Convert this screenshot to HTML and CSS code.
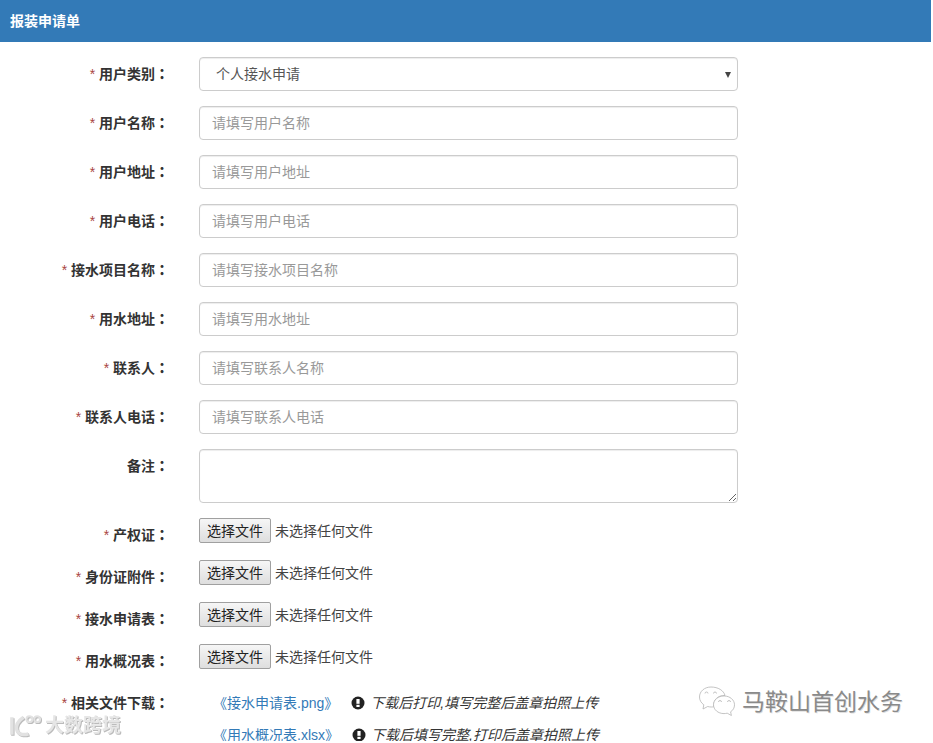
FILE: index.html
```html
<!DOCTYPE html>
<html lang="zh-CN">
<head>
<meta charset="utf-8">
<title>报装申请单</title>
<link rel="stylesheet" href="styles.css">
</head>
<body>
<div class="page">
<header class="panel-head">报装申请单</header>
<form class="form">
  <div class="row"><label class="label"><i>*</i> 用户类别<b lang="zh-TW">：</b></label>
    <div class="select-wrap"><select class="control select"><option>个人接水申请</option></select></div></div>
  <div class="row"><label class="label"><i>*</i> 用户名称<b lang="zh-TW">：</b></label><input class="control" placeholder="请填写用户名称"></div>
  <div class="row"><label class="label"><i>*</i> 用户地址<b lang="zh-TW">：</b></label><input class="control" placeholder="请填写用户地址"></div>
  <div class="row"><label class="label"><i>*</i> 用户电话<b lang="zh-TW">：</b></label><input class="control" placeholder="请填写用户电话"></div>
  <div class="row"><label class="label"><i>*</i> 接水项目名称<b lang="zh-TW">：</b></label><input class="control" placeholder="请填写接水项目名称"></div>
  <div class="row"><label class="label"><i>*</i> 用水地址<b lang="zh-TW">：</b></label><input class="control" placeholder="请填写用水地址"></div>
  <div class="row"><label class="label"><i>*</i> 联系人<b lang="zh-TW">：</b></label><input class="control" placeholder="请填写联系人名称"></div>
  <div class="row"><label class="label"><i>*</i> 联系人电话<b lang="zh-TW">：</b></label><input class="control" placeholder="请填写联系人电话"></div>
  <div class="row"><label class="label">备注<b lang="zh-TW">：</b></label><textarea class="control area"></textarea></div>
  <div class="row file-row"><label class="label"><i>*</i> 产权证<b lang="zh-TW">：</b></label><div class="file"><button type="button" class="file-btn">选择文件</button><span>未选择任何文件</span></div></div>
  <div class="row file-row"><label class="label"><i>*</i> 身份证附件<b lang="zh-TW">：</b></label><div class="file"><button type="button" class="file-btn">选择文件</button><span>未选择任何文件</span></div></div>
  <div class="row file-row"><label class="label"><i>*</i> 接水申请表<b lang="zh-TW">：</b></label><div class="file"><button type="button" class="file-btn">选择文件</button><span>未选择任何文件</span></div></div>
  <div class="row file-row"><label class="label"><i>*</i> 用水概况表<b lang="zh-TW">：</b></label><div class="file"><button type="button" class="file-btn">选择文件</button><span>未选择任何文件</span></div></div>
  <div class="row dl-row"><label class="label"><i>*</i> 相关文件下载<b lang="zh-TW">：</b></label>
    <div class="downloads">
      <div class="dl"><a class="dl-link" href="#">《接水申请表.png》</a>
        <svg class="sign" viewBox="0 0 14 14"><circle cx="7" cy="7" r="6.500"/><rect x="5.400" y="3" width="3.200" height="4.800" fill="#fff"/><rect x="5.400" y="8.800" width="3.200" height="2.200" fill="#fff"/></svg>
        <em>下载后打印,填写完整后盖章拍照上传</em></div>
      <div class="dl"><a class="dl-link" href="#">《用水概况表.xlsx》</a>
        <svg class="sign" viewBox="0 0 14 14"><circle cx="7" cy="7" r="6.500"/><rect x="5.400" y="3" width="3.200" height="4.800" fill="#fff"/><rect x="5.400" y="8.800" width="3.200" height="2.200" fill="#fff"/></svg>
        <em>下载后填写完整,打印后盖章拍照上传</em></div>
    </div>
  </div>
</form>
<div class="mark-wechat">
  <svg class="mark-icon" viewBox="0 0 38 34" fill="#fff" stroke="#b5b5b5" stroke-width="0.800">
    <path d="M13 2C6.500 2 1.500 6.300 1.500 12c0 3.200 1.700 6 4.300 7.800L5 24l4.700-2.500c1.200.3 2.300.5 3.600.5 1 0 1.500-.1 2.300-.2C15 15 20 10 27 10.500 25.800 5.500 20 2 13 2z"/>
    <path d="M26 11c-6 0-10.500 4-10.500 8.800S20 28.600 26 28.600c1.100 0 2.200-.2 3.200-.4l4.200 2.300-.8-3.700c2.600-1.600 3.900-4.100 3.900-7 0-4.800-4.500-8.800-10.300-8.800z"/>
    <path d="M7 8.500a1.500 1.500 0 0 1 3 0M15.500 8.500a1.500 1.500 0 0 1 3 0M20.500 17a1.500 1.500 0 0 1 3 0M29.500 17a1.500 1.500 0 0 1 3 0" fill="none"/>
  </svg>
  <span class="mark-name">马鞍山首创水务</span>
</div>
<div class="mark-brand">
  <svg class="brand-icon" viewBox="0 0 36 24" fill="none" stroke="#e2e2e2" stroke-width="3.500">
    <path d="M4 3v18M16 3C10 7 8 12 9 16c1 4 6 6 12 4"/><circle cx="22" cy="5" r="3" stroke-width="2"/><circle cx="30" cy="5" r="3" stroke-width="2"/>
  </svg>
  <span class="brand-name">大数跨境</span>
</div>
</div>
</body>
</html>
```
FILE: styles.css
```css
* { box-sizing: border-box; }
html, body { height: 743px; overflow: hidden; }
body {
  margin: 0;
  background: #fff;
  color: #333;
  font-family: "Liberation Sans", "Noto Sans CJK SC", sans-serif;
  font-size: 14px;
  line-height: 20px;
}
.page {
  position: relative;
  width: 931px;
  height: 741px;
  overflow: hidden;
}
.panel-head {
  height: 42px;
  padding: 11px 10px;
  background: #337ab7;
  color: #fff;
  font-weight: 700;
}
.form { padding-top: 15px; }
.row {
  display: grid;
  grid-template-columns: 199px 539px;
  margin-bottom: 15px;
}
.label {
  padding: 7px 30px 0 0;
  text-align: right;
  font-weight: 700;
}
.label i { color: #a94442; font-style: normal; font-weight: 400; }
.control {
  display: block;
  width: 100%;
  height: 34px;
  padding: 6px 12px;
  border: 1px solid #ccc;
  border-radius: 4px;
  background: #fff;
  color: #555;
  font: inherit;
  box-shadow: inset 0 1px 1px rgba(0,0,0,.075);
}
.control::placeholder { color: #999; opacity: 1; }
.select-wrap { position: relative; }
.select-wrap::after {
  content: "";
  position: absolute;
  top: 15px;
  right: 7px;
  border-left: 3.5px solid transparent;
  border-right: 3.5px solid transparent;
  border-top: 6px solid #444;
}
.select { appearance: none; -webkit-appearance: none; padding-left: 16px; }
.area { height: 54px; resize: vertical; }
.file-row { height: 27px; }
.file { display: flex; align-items: flex-start; gap: 4px; color: #444; }
.file-btn {
  width: 72px;
  height: 25px;
  padding: 0;
  border: 1px solid #a0a0a0;
  border-radius: 2px;
  background: linear-gradient(#f6f6f6, #dedede);
  color: #222;
  font: inherit;
}
.file span { line-height: 27px; }
.dl-row { margin-bottom: 0; }
.downloads { padding: 7px 0 0 14px; }
.dl {
  display: flex;
  align-items: center;
  height: 20px;
  margin-bottom: 12px;
}
.dl-link { color: #337ab7; text-decoration: none; white-space: nowrap; }
.sign { width: 14px; height: 14px; margin: 0 5px 0 13px; fill: #222; flex: none; }
.dl em { font-style: italic; white-space: nowrap; color: #333; }
.mark-wechat {
  position: absolute;
  left: 698px;
  top: 685px;
  display: flex;
  align-items: center;
  gap: 6px;
}
.mark-icon { width: 38px; height: 34px; }
.mark-name {
  color: #8a8a8a;
  font-size: 23px;
  line-height: 32px;
  text-shadow: 1px 1px 0 rgba(0,0,0,.12);
}
.mark-brand {
  position: absolute;
  left: 8px;
  top: 714px;
  display: flex;
  align-items: center;
  gap: 2px;
  filter: drop-shadow(1px 1px 0 #bbb);
}
.brand-icon { width: 35px; height: 24px; }
.brand-name { color: #e6e6e6; font-size: 19px; line-height: 24px; font-weight: 700; }
```
